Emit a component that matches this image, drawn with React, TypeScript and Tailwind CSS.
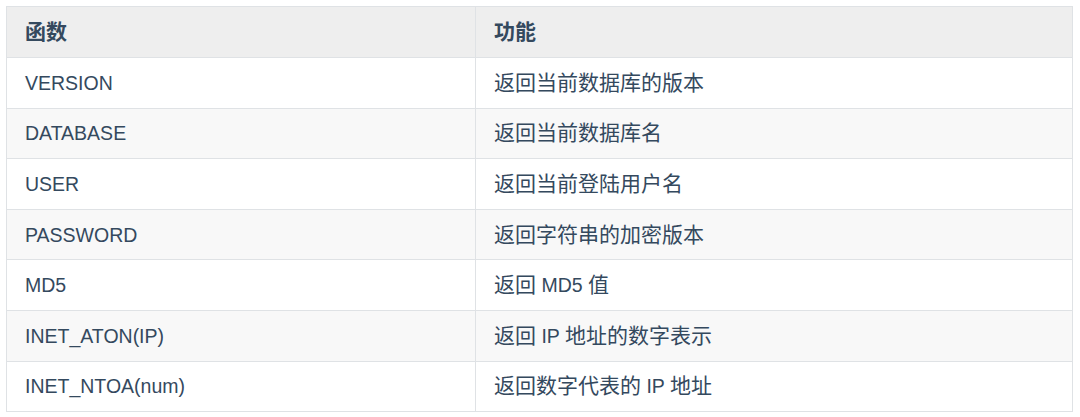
import React from "react";

const rows: [string, string][] = [
  ["VERSION", "返回当前数据库的版本"],
  ["DATABASE", "返回当前数据库名"],
  ["USER", "返回当前登陆用户名"],
  ["PASSWORD", "返回字符串的加密版本"],
  ["MD5", "返回 MD5 值"],
  ["INET_ATON(IP)", "返回 IP 地址的数字表示"],
  ["INET_NTOA(num)", "返回数字代表的 IP 地址"],
];

function Mixed({ text }: { text: string }) {
  const parts = text.split(/([\u4e00-\u9fff]+)/).filter((p) => p.length > 0);
  return (
    <>
      {parts.map((p, i) =>
        /[\u4e00-\u9fff]/.test(p) ? (
          <span key={i} className="text-[21px] leading-[24px]">
            {p}
          </span>
        ) : (
          <span key={i}>{p}</span>
        )
      )}
    </>
  );
}

export default function App() {
  return (
    <div
      className="w-[1080px] h-[417px] bg-white pt-[6px] pl-[6px]"
      style={{ fontFamily: '"Liberation Sans", Arial, "Noto Sans CJK SC", sans-serif' }}
    >
      <table className="w-[1067px] border-collapse border border-[#dfe2e5] text-[19.5px] leading-[24px] text-[#34495e] table-fixed">
        <colgroup>
          <col className="w-[469px]" />
          <col />
        </colgroup>
        <thead>
          <tr className="bg-[#eeeeee] h-[51px]">
            <th className="border border-[#dfe2e5] text-left font-bold px-[18px]">
              <Mixed text="函数" />
            </th>
            <th className="border border-[#dfe2e5] text-left font-bold px-[18px]">
              <Mixed text="功能" />
            </th>
          </tr>
        </thead>
        <tbody>
          {rows.map(([a, b], i) => (
            <tr key={a} className={`h-[50.6px] ${i % 2 === 1 ? "bg-[#f8f8f8]" : "bg-white"}`}>
              <td className="border border-[#dfe2e5] px-[18px]">{a}</td>
              <td className="border border-[#dfe2e5] px-[18px]">
                <Mixed text={b} />
              </td>
            </tr>
          ))}
        </tbody>
      </table>
    </div>
  );
}
